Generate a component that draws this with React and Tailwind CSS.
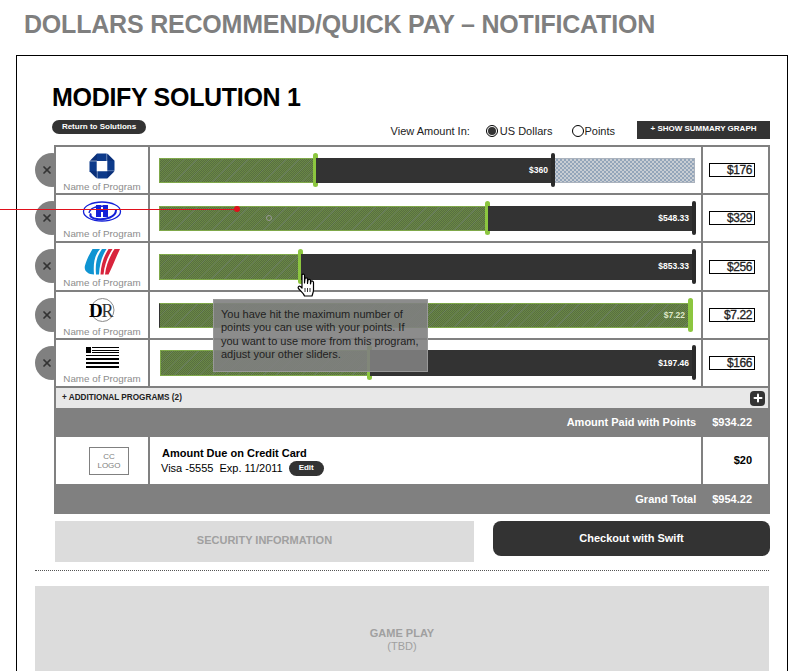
import { Plus, X } from 'lucide-react';

const font = 'font-["Liberation_Sans",Arial,sans-serif]';
const green = 'bg-[image:repeating-linear-gradient(135deg,transparent_0px,transparent_8px,rgba(125,135,150,.25)_8px,rgba(125,135,150,.25)_9px),repeating-conic-gradient(#6a8845_0%_25%,#586e42_0%_50%)] bg-[size:auto,2px_2px] border border-[#7fa84a]';

function ChaseLogo() {
  return (
    <svg width="26" height="26" viewBox="0 0 26 26">
      <path d="M8 .5H17.700V8H8Z" fill="#0d3a8a" />
      <path d="M18.300 .5L25.500 7.700V17.700H18.300Z" fill="#0d3a8a" />
      <path d="M25.500 18.300L18.300 25.500H8.300V18.300Z" fill="#0d3a8a" />
      <path d="M7.700 25.500L.5 18.300V8.300H7.700Z" fill="#0d3a8a" />
      <path d="M8 .5L.9 7.700H8ZM18.300 .9V7.700H25.100ZM25.100 18.300H18.300V25.100ZM.9 18.300L7.700 25.100V18.300Z" fill="#0a2f78" />
    </svg>
  );
}

function HiltonLogo() {
  return (
    <svg width="40" height="24" viewBox="0 0 40 24" fill="none">
      <ellipse cx="20" cy="10.500" rx="18.500" ry="9.500" stroke="#1420d8" strokeWidth="1.300" />
      <path d="M7 12C8 7 15 5 23 5" stroke="#1420d8" strokeWidth="1.300" />
      <path d="M34 9C34 16 24 19 15 18C10 17.500 7 15 9 12.500" stroke="#1420d8" strokeWidth="2" />
      <path d="M14 4H19V16H14ZM21 4H26V16H21ZM18 9H22V11H18Z" fill="#1420d8" />
    </svg>
  );
}

function UnitedLogo() {
  return (
    <svg width="36" height="26" viewBox="0 0 36 26">
      <path d="M8.500 0H16C11 6 9 13 10 25.500C4 25.500 -.5 22 1 16.500C2.500 11 5.500 5 8.500 0Z" fill="#0f94d2" />
      <path d="M18 0H22.500C18 7 15.500 15 15 25.500H12C11 14 13 7 18 0Z" fill="#0f94d2" />
      <path d="M24.500 0H28.500C24 7 20.500 15 19.500 25.500H16.500C17 15 20 7 24.500 0Z" fill="#d8243c" />
      <path d="M30.500 0H36C32 8 28 19 24.500 25.500H21C22 16 26 7 30.500 0Z" fill="#d8243c" />
    </svg>
  );
}

function DrLogo() {
  return (
    <svg width="26" height="28" viewBox="0 0 26 28" fill="none">
      <circle cx="13.500" cy="13" r="11.500" stroke="#8a8a8a" strokeWidth="1" />
      <text x="0" y="20" fontFamily="Liberation Serif, serif" fontWeight="700" fontSize="19" fill="#000">D</text>
      <text x="12.500" y="20" fontFamily="Liberation Serif, serif" fontSize="18" fill="#333">R</text>
    </svg>
  );
}

function FlagLogo() {
  return (
    <div className="w-[33px] flex flex-col">
      <div className="flex h-[6px] gap-[1px]">
        <div className="w-[5px] h-[6px] bg-black" />
        <div className="flex-1 flex flex-col justify-between">
          <div className="h-[1px] bg-black" />
          <div className="h-[1px] bg-black" />
          <div className="h-[1px] bg-black" />
        </div>
      </div>
      <div className="h-[1px] bg-black mt-[2px]" />
      <div className="h-[2px] bg-black mt-[2px]" />
      <div className="h-[2px] bg-black mt-[2px]" />
      <div className="h-[2px] bg-black mt-[2px]" />
    </div>
  );
}

const programs = [
  { logo: <ChaseLogo />, amount: '$176', value: '$360', height: 'h-[48px]', pad: 'pt-[5px]', green: 'w-[157px]', dark: 'w-[237px]', rest: true, barH: 'h-[25px]' },
  { logo: <HiltonLogo />, amount: '$329', value: '$548.33', height: 'h-[48px]', pad: 'pt-[4px]', green: 'w-[329px]', dark: 'flex-1', barH: 'h-[25px]' },
  { logo: <UnitedLogo />, amount: '$256', value: '$853.33', height: 'h-[49px]', pad: 'pt-[5px]', green: 'w-[142px]', dark: 'flex-1', barH: 'h-[26px]' },
  { logo: <DrLogo />, amount: '$7.22', value: '$7.22', height: 'h-[48px]', pad: 'pt-[5px]', green: 'flex-1', full: true, barH: 'h-[25px]' },
  { logo: <FlagLogo />, amount: '$166', value: '$197.46', height: 'h-[48px]', pad: 'pt-[4px]', green: 'w-[210px] ml-[1px]', dark: 'flex-1', barH: 'h-[26px]' },
];

function ProgramRow({ p }) {
  return (
    <div className={`relative flex ${p.height} border-b-2 border-[#808080] bg-white`}>
      {/* кружок удаления торчит слева от таблицы */}
      <div className="absolute -left-[21px] top-[6px] w-[34px] h-[34px] rounded-full bg-[#808080] -z-10 flex items-center pl-[6px]">
        <X size={12} strokeWidth={3.500} className="text-[#333]" />
      </div>
      <div className={`w-[92px] shrink-0 flex flex-col items-center ${p.pad}`}>
        <div className="h-[27px] flex items-center">{p.logo}</div>
        <div className="text-[9.800px] leading-[12px] text-[#8c8c8c] mt-[2px]">Name of Program</div>
      </div>
      <div className="w-[2px] bg-[#808080]" />
      <div className="flex-1 flex items-center pl-[9px] pr-[7px]">
        <div className={`flex w-full ${p.barH}`}>
          <div className={`relative ${p.green} ${green} ${p.full ? 'border-l-[#333] mr-[3px]' : ''} flex items-center justify-end pr-[5px]`}>
            {p.full && <span className="text-[8.500px] font-bold text-[#dfe8c8]">{p.value}</span>}
            <div className="absolute -right-[3px] -top-[6px] -bottom-[5px] w-[5px] rounded-full bg-[#8cc63f]" />
          </div>
          {p.dark && (
            <div className={`relative ${p.dark} bg-[#333] flex items-center justify-end pr-[5px]`}>
              <span className="text-[8.500px] font-bold text-white">{p.value}</span>
              <div className="absolute -right-[2px] -top-[5px] -bottom-[4px] w-[4px] rounded-full bg-[#2b2b2b]" />
            </div>
          )}
          {p.rest && (
            <div className="flex-1 mr-[-1px] border border-[#aab2bd] bg-[repeating-conic-gradient(#93a5ba_0%_25%,#c8cdd3_0%_50%)] bg-[length:4px_4px]" />
          )}
        </div>
      </div>
      <div className="w-[2px] bg-[#808080]" />
      <div className="w-[65px] flex items-center pl-[6px]">
        <div className="w-[46px] h-[14px] border border-black text-[12px] leading-[12px] tracking-[-0.4px] text-right pr-[2px] text-[#222] [-webkit-text-stroke:0.3px_#222]">{p.amount}</div>
      </div>
    </div>
  );
}

export default function App() {
  return (
    <div className={`relative h-[671px] w-[812px] overflow-hidden bg-white ${font}`}>
      <h1 className="pl-[24px] pt-[10px] h-[55px] text-[25px] leading-[29px] tracking-[-0.2px] font-bold text-[#7f7f7f]">DOLLARS RECOMMEND/QUICK PAY – NOTIFICATION</h1>
      <div className="ml-[16px] w-[772px] h-[620px] border border-black relative isolate">
        <div className="pl-[35px] pt-[26px] text-[25px] leading-[30px] tracking-[-0.3px] font-bold text-black">MODIFY SOLUTION 1</div>

        <div className="flex items-end pl-[35px] pr-[17px] h-[22px] mt-[5px]">
          <div className="h-[14px] w-[94px] mb-[5px] rounded-full bg-[#333] text-white text-[8px] font-bold leading-[14px] text-center">Return to Solutions</div>
          <div className="flex-1 flex items-end justify-end text-[11px] text-[#222]">
            <div className="flex items-center h-[12px] mb-[2px]">
              <span>View Amount In:</span>
              <span className="ml-[16px] w-[12px] h-[12px] rounded-full border border-black flex items-center justify-center">
                <span className="w-[8px] h-[8px] rounded-full bg-[#333]" />
              </span>
              <span className="ml-[2px]">US Dollars</span>
              <span className="ml-[20px] w-[12px] h-[12px] rounded-full border border-black" />
              <span>Points</span>
            </div>
            <div className="ml-[22px] w-[133px] h-[18px] bg-[#333] text-white text-[8px] font-bold leading-[16px] text-center">+ SHOW SUMMARY GRAPH</div>
          </div>
        </div>

        <div className="ml-[37px] w-[716px] mt-[6px] border-2 border-b-0 border-[#808080] bg-white">
          {programs.map((p) => (
            <ProgramRow key={p.amount} p={p} />
          ))}
          <div className="h-[20px] bg-[#e8e8e8] flex items-center justify-between pl-[6px] pr-[3px]">
            <span className="text-[8.200px] font-bold text-[#222]">+ ADDITIONAL PROGRAMS (2)</span>
            <span className="w-[15px] h-[15px] rounded-[4px] bg-[#333] flex items-center justify-center">
              <Plus size={12} strokeWidth={4} className="text-white" />
            </span>
          </div>
          <div className="h-[29px] bg-[#808080] flex items-center justify-end text-white text-[11px] font-bold pr-[16px] pb-[1px]">
            <span>Amount Paid with Points</span>
            <span className="ml-[16px]">$934.22</span>
          </div>
          <div className="h-[47px] flex">
            <div className="w-[92px] flex items-center justify-center pl-[14px]">
              <div className="w-[40px] h-[28px] border border-[#808080] text-[8px] leading-[9px] text-[#808080] text-center pt-[4px]">CC<br />LOGO</div>
            </div>
            <div className="w-[2px] bg-[#808080]" />
            <div className="flex-1 pl-[12px] pt-[9px]">
              <div className="text-[11px] leading-[14px] font-bold text-black">Amount Due on Credit Card</div>
              <div className="flex items-center text-[11px] leading-[15px] text-black mt-[1px] -ml-[1px]">
                <span>Visa -5555&nbsp; Exp. 11/2011</span>
                <span className="ml-[6px] w-[35px] h-[15px] rounded-full bg-[#333] text-white text-[8px] font-bold leading-[14px] text-center">Edit</span>
              </div>
            </div>
            <div className="w-[2px] bg-[#808080]" />
            <div className="w-[65px] flex items-center justify-end pr-[16px] text-[11px] font-bold text-black">$20</div>
          </div>
          <div className="h-[30px] bg-[#808080] flex items-center justify-end text-white text-[11px] font-bold pr-[16px]">
            <span>Grand Total</span>
            <span className="ml-[16px]">$954.22</span>
          </div>
        </div>

        <div className="flex ml-[38px] w-[715px] mt-[7px] h-[41px]">
          <div className="w-[419px] bg-[#dcdcdc] flex items-center justify-center text-[11px] font-bold text-[#a0a0a0] pb-[2px]">SECURITY INFORMATION</div>
          <div className="ml-[19px] flex-1 h-[35px] rounded-[8px] bg-[#333] flex items-center justify-center text-white text-[11px] font-bold">Checkout with Swift</div>
        </div>

        <div className="ml-[18px] w-[734px] mt-[8px] border-t border-dotted border-[#555]" />

        <div className="ml-[18px] w-[734px] mt-[15px] h-[120px] bg-[#dcdcdc] pt-[41px] text-center text-[11px] leading-[13px] font-bold text-[#a0a0a0]">
          GAME PLAY
          <div className="font-normal">(TBD)</div>
        </div>

        {/* подсказка поверх слайдеров */}
        <div className="absolute left-[196px] top-[243px] w-[215px] h-[73px] bg-[#808080]/90 border border-[#999] px-[7px] pt-[8px] text-[11px] leading-[13.300px] text-[#222]">
          You have hit the maximum number of points you can use with your points. If you want to use more from this program, adjust your other sliders.
        </div>
      </div>

      {/* красная линия аннотации */}
      <div className="absolute left-0 top-[209px] w-[237px] h-[1px] bg-[#e0101c]" />
      <div className="absolute left-[234px] top-[206px] w-[6px] h-[6px] rounded-full bg-[#e0101c]" />
      <div className="absolute left-[266px] top-[215px] w-[6px] h-[6px] rounded-full border border-[#999]" />

      {/* курсор-рука */}
      <svg className="absolute left-[297px] top-[273px]" width="20" height="25" viewBox="0 0 20 25">
        <path d="M5 2C5 .8 7.500 .8 7.500 2V10L8 5.500C8.500 4.500 10.500 4.500 10.500 6V10.500L11 7C11.500 6 13.500 6 13.500 7.500V11L14 8.500C14.500 7.500 16.500 8 16.500 9.500V17C16.500 19 15.500 21 15 23H7.500C6.500 20 4 18.500 1.500 15.500C.5 14 2 12.500 3.500 13.500L5 15Z" fill="#fff" stroke="#000" strokeWidth="1.200" strokeLinejoin="round" />
        <path d="M8 15V19M10.500 15V19M13 15V19" stroke="#000" strokeWidth=".8" />
      </svg>
    </div>
  );
}
